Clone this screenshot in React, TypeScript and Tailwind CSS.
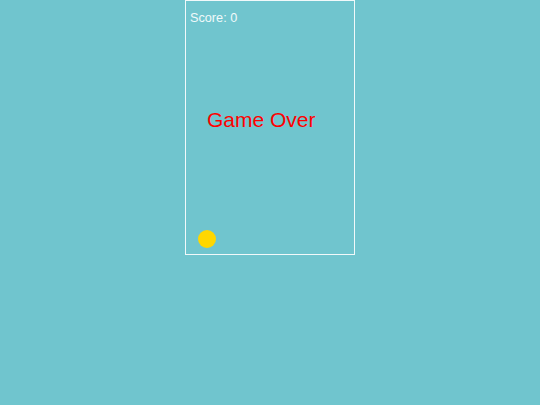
import React from 'react';

export default function App() {
  return (
    <div className="w-[540px] h-[405px] bg-[#70c5ce] flex justify-center font-['Liberation_Sans',Arial,sans-serif]">
      {/* game canvas */}
      <div className="relative w-[170px] h-[255px] border border-white/90">
        <div className="absolute left-[4px] top-[9px] text-[12.7px] leading-[16px] text-white/90">Score: 0</div>
        <div className="absolute left-[21px] top-[107px] text-[21px] leading-[24px] text-[#ff0000]">Game Over</div>
        <div className="absolute left-[12px] top-[229px] w-[18px] h-[18px] rounded-full bg-[#ffd700]" />
      </div>
    </div>
  );
}
